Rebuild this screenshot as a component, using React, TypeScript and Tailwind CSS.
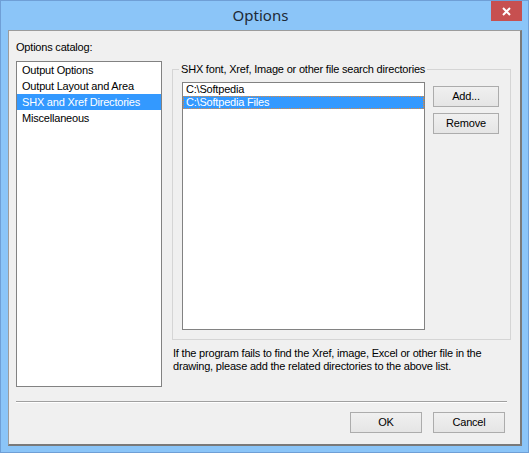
import { useState } from "react";

const CATALOG = [
    "Output Options",
    "Output Layout and Area",
    "SHX and Xref Directories",
    "Miscellaneous",
];

const DIRS = ["C:\\Softpedia", "C:\\Softpedia Files"];

// classic dialog font, roughly MS Sans Serif at 8pt
const uiFont =
    "font-['Liberation_Sans',Arial,sans-serif] text-[11px] leading-[13px] tracking-[-0.2px]";
const btnClass =
    "h-[21px] border border-[#acacac] bg-linear-to-b from-[#f0f0f0] to-[#e5e5e5] text-black text-[11px] leading-[13px] tracking-[-0.2px]";

export default function App() {
    const [catalog, setCatalog] = useState(2);
    const [dir, setDir] = useState(1);

    return (
        <div className="w-[529px] h-[453px] flex flex-col bg-[#8bc5f8] border border-[#6f9fd6]">
            {/* Title bar */}
            <div className="relative h-[29px] flex items-center justify-center pr-[8px]">
                <span className="font-['Noto_Sans',sans-serif] text-[15px] text-[#1e2a36] leading-none -mt-[1px]">
                    Options
                </span>
                <button className="absolute top-0 right-[6px] w-[31px] h-[20px] bg-[#c75050] flex items-center justify-center">
                    <svg width="9" height="9" viewBox="0 0 9 9">
                        <path
                            d="M1 1L8 8M8 1L1 8"
                            stroke="white"
                            strokeWidth="2"
                        />
                    </svg>
                </button>
            </div>

            {/* Client area */}
            <div
                className={`ml-[7px] mr-[6px] h-[416px] flex flex-col bg-[#f0f0f0] border-l border-t border-[#9c9c9c] border-r-2 border-b-2 border-r-[#7a7a7a] border-b-[#7a7a7a] text-black ${uiFont}`}
            >
                <div className="flex pt-[10px] pl-[7px] pr-[9px]">
                    {/* Options catalog */}
                    <div className="flex flex-col">
                        <span className="h-[13px]">Options catalog:</span>
                        <div className="mt-[7px] w-[146px] h-[326px] border border-[#828282] bg-white">
                            {CATALOG.map((item, i) => (
                                <div
                                    key={item}
                                    onClick={() => setCatalog(i)}
                                    className={`h-[16px] pl-[5px] flex items-center ${
                                        catalog === i
                                            ? "bg-[#3399ff] text-white"
                                            : ""
                                    }`}
                                >
                                    {item}
                                </div>
                            ))}
                        </div>
                    </div>

                    {/* Right side */}
                    <div className="ml-[10px] mt-[22px] flex flex-col">
                        <fieldset className="w-[339px] border border-[#d5d5d5] pl-[9px] pr-[11px] pb-[9px]">
                            <legend className="-ml-[3px] px-[2px] h-[13px]">
                                SHX font, Xref, Image or other file search
                                directories
                            </legend>
                            <div className="flex mt-[6px]">
                                <div className="w-[243px] h-[248px] border border-[#828282] bg-white">
                                    {DIRS.map((d, i) => (
                                        <div
                                            key={d}
                                            onClick={() => setDir(i)}
                                            className={`h-[13px] pl-[2px] border border-dotted ${
                                                dir === i
                                                    ? "bg-[#3399ff] text-white border-[#e08a3c]"
                                                    : "border-transparent"
                                            }`}
                                        >
                                            <span className="block -mt-[1px]">
                                                {d}
                                            </span>
                                        </div>
                                    ))}
                                </div>
                                <div className="ml-[8px] mt-[4px] flex flex-col gap-[6px]">
                                    <button className={`w-[66px] ${btnClass}`}>
                                        Add...
                                    </button>
                                    <button className={`w-[66px] ${btnClass}`}>
                                        Remove
                                    </button>
                                </div>
                            </div>
                        </fieldset>
                        <p className="mt-[7px] ml-[1px] w-[338px]">
                            If the program fails to find the Xref, image,
                            Excel or other file in the drawing, please add
                            the related directories to the above list.
                        </p>
                    </div>
                </div>

                {/* Separator */}
                <div className="mt-[14px] ml-[7px] mr-[13px] border-t border-[#a0a0a0] border-b border-b-white" />

                {/* Actions */}
                <div className="mt-[9px] flex justify-end gap-[11px] pr-[15px]">
                    <button
                        className={`w-[72px] ${btnClass} border-[#3399ff]`}
                    >
                        OK
                    </button>
                    <button className={`w-[72px] ${btnClass}`}>Cancel</button>
                </div>
            </div>
        </div>
    );
}
